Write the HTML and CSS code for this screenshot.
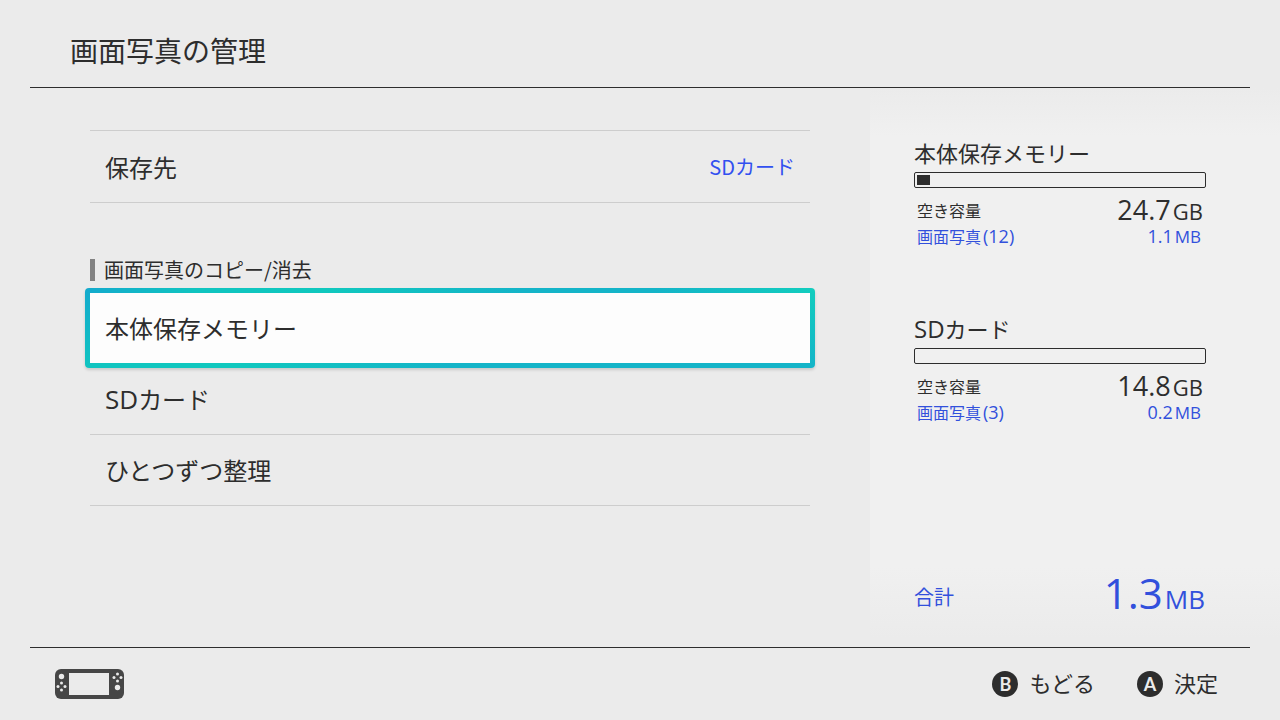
FILE: index.html
```html
<!DOCTYPE html>
<html lang="ja">
<head>
<meta charset="utf-8">
<meta name="viewport" content="width=device-width, initial-scale=1">
<title>画面写真の管理</title>
<link rel="stylesheet" href="styles.css">
</head>
<body>
<header class="header">
  <h1 class="title">画面写真の管理</h1>
</header>
<main class="main">
  <div class="settings">
    <button class="item item-first" type="button"><span>保存先</span><span class="value">SDカード</span></button>
    <h2 class="section">画面写真のコピー/消去</h2>
    <div class="list">
      <button class="item selected" type="button"><span>本体保存メモリー</span></button>
      <button class="item" type="button"><span><span class="latin">SD</span>カード</span></button>
      <button class="item" type="button"><span>ひとつずつ整理</span></button>
    </div>
  </div>
  <aside class="storage">
    <section class="device">
      <h2 class="device-name">本体保存メモリー</h2>
      <div class="meter"><div class="fill" style="width: 13px"></div></div>
      <div class="free"><span>空き容量</span><span class="amount">24.7<span class="unit">GB</span></span></div>
      <div class="photos"><span class="count">画面写真<span class="number">(12)</span></span><span class="small-amount">1.1<span class="small-unit">MB</span></span></div>
    </section>
    <section class="device">
      <h2 class="device-name"><span class="latin latin-small">SD</span>カード</h2>
      <div class="meter"></div>
      <div class="free"><span>空き容量</span><span class="amount">14.8<span class="unit">GB</span></span></div>
      <div class="photos"><span class="count">画面写真<span class="number">(3)</span></span><span class="small-amount">0.2<span class="small-unit">MB</span></span></div>
    </section>
    <div class="total"><span class="total-label">合計</span><span class="sum">1.3<span class="sum-unit">MB</span></span></div>
  </aside>
</main>
<footer class="footer">
  <svg class="console" width="70" height="30" viewBox="0 0 70 30" role="img" aria-label="本体">
    <rect width="69" height="30" rx="6" fill="#464646"/>
    <rect x="14" y="4" width="40" height="22" fill="#ebebeb"/>
    <g fill="#ebebeb">
      <circle cx="6.5" cy="7.5" r="2.7"/>
      <circle cx="6.5" cy="14" r="1.5"/><circle cx="6.5" cy="21" r="1.5"/><circle cx="3" cy="17.500" r="1.5"/><circle cx="10" cy="17.500" r="1.5"/>
      <circle cx="62.500" cy="5" r="1.5"/><circle cx="62.500" cy="12" r="1.5"/><circle cx="59" cy="8.500" r="1.5"/><circle cx="66" cy="8.500" r="1.5"/>
      <circle cx="62.500" cy="18.500" r="2.7"/>
    </g>
  </svg>
  <div class="actions">
    <button class="action" type="button"><span class="key">B</span>もどる</button>
    <button class="action" type="button"><span class="key">A</span>決定</button>
  </div>
</footer>
</body>
</html>
```
FILE: styles.css
```css
* { box-sizing: border-box; }

body {
  margin: 0;
  min-height: 100vh;
  display: flex;
  flex-direction: column;
  background: #ebebeb;
  color: #2d2d2d;
  font-family: "Noto Sans CJK JP", sans-serif;
}

button {
  margin: 0;
  padding: 0;
  border: 0;
  background: none;
  color: inherit;
  font: inherit;
  cursor: pointer;
}

h1, h2 { margin: 0; font-weight: 400; }

.header {
  margin: 0 30px;
  padding: 30px 40px 17px;
  border-bottom: 1px solid #2d2d2d;
}

.title { font-size: 28px; line-height: 40px; }

.main {
  flex: 1;
  display: grid;
  grid-template-columns: minmax(0, 1fr) 410px;
}

.settings { padding: 42px 60px 40px 90px; }

.item {
  position: relative;
  display: flex;
  align-items: center;
  justify-content: space-between;
  width: 100%;
  height: 71px;
  padding: 0 15px;
  border-bottom: 1px solid #cdcdcd;
  font-size: 24px;
  line-height: 36px;
  text-align: left;
}

.item-first { height: 73px; border-top: 1px solid #cdcdcd; }

.value { font-size: 20px; color: #3250f0; }

.latin { font-family: "Open Sans", sans-serif; font-size: 26px; line-height: 1; }

.latin-small { font-size: 24px; }

.section {
  margin: 56px 0 12px;
  padding-left: 9px;
  border-left: 5px solid #828282;
  font-size: 20px;
  line-height: 22px;
}

.selected { border-bottom-color: transparent; }

.selected::before {
  content: "";
  position: absolute;
  inset: -5px;
  border: 5px solid transparent;
  border-radius: 4px;
  background:
    linear-gradient(#fdfdfd, #fdfdfd) padding-box,
    linear-gradient(#14aacd, #10c4c0) left / 5px 100% no-repeat border-box,
    linear-gradient(#12cdbe, #14b4c8) right / 5px 100% no-repeat border-box,
    linear-gradient(90deg, #14aacd, #10c4c0 15%, #10c8be 33%, #14b4c8 60%, #14b4c8 78%, #12cdbe) top / 100% 50% no-repeat border-box,
    linear-gradient(90deg, #10c4c0, #10c8be 20%, #14b4c8 50%, #14b4c8) bottom / 100% 50% no-repeat border-box;
  box-shadow: 0 2px 3px rgba(0, 0, 0, 0.14);
}

.selected span { position: relative; }

.storage {
  display: flex;
  flex-direction: column;
  padding: 50px 74px 30px 44px;
  background: linear-gradient(#ebebeb, #f0f0f0 48px, #f0f0f0 calc(100% - 80px), #ebebeb calc(100% - 8px));
}

.device { margin-bottom: 64px; }

.device-name { font-size: 22px; line-height: 28px; }

.meter {
  height: 16px;
  margin: 6px 0 10px;
  padding: 2px;
  border: 1px solid #2d2d2d;
  border-radius: 2px;
}

.fill { height: 10px; background: #2d2d2d; }

.free, .photos, .total {
  display: flex;
  align-items: center;
  justify-content: space-between;
}

.free { padding: 0 3px; font-size: 16px; line-height: 24px; }

.photos {
  padding: 0 5px 0 3px;
  color: #3250dc;
  font-size: 16px;
  line-height: 28px;
}

.count { display: flex; align-items: center; gap: 2px; }

.number { font-family: "Open Sans", sans-serif; font-size: 18px; }

.amount, .small-amount, .sum {
  display: flex;
  align-items: baseline;
  gap: 2px;
  font-family: "Open Sans", sans-serif;
}

.amount { font-size: 27px; }

.unit { font-size: 22px; line-height: 1; }

.small-amount { font-size: 18px; }

.small-unit { font-size: 17px; line-height: 1; }

.total {
  margin-top: auto;
  padding-right: 1px;
  color: #3250dc;
  font-size: 20px;
  line-height: 48px;
}

.total-label { padding-top: 8px; line-height: 28px; }

.sum { font-size: 42px; }

.sum-unit { font-size: 26px; line-height: 1; }

.footer {
  display: flex;
  align-items: center;
  justify-content: space-between;
  margin: 0 30px;
  padding: 16px 32px 20px 25px;
  border-top: 1px solid #2d2d2d;
}

.console { display: block; margin-top: 4px; }

.actions { display: flex; gap: 42px; }

.action {
  display: flex;
  align-items: center;
  gap: 11px;
  font-size: 22px;
  line-height: 36px;
}

.key {
  width: 26px;
  height: 26px;
  margin-top: 4px;
  border-radius: 50%;
  background: #2d2d2d;
  color: #ebebeb;
  font-family: Lato, sans-serif;
  font-size: 18px;
  font-weight: 700;
  line-height: 26px;
  text-align: center;
}
```
